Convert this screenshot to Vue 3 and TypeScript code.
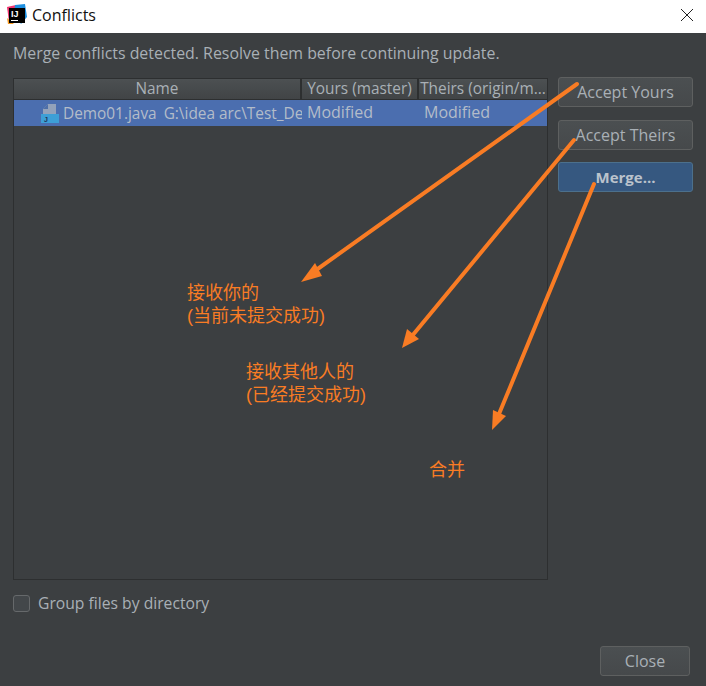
<script setup lang="ts">
interface Arrow { points: string; head: string }
const arrows: Arrow[] = [
  { points: '577,84 312,273', head: '301,282 315,263 322,276' },
  { points: '574,140 412,336', head: '402,348 407,329 419,339' },
  { points: '594,184 499,414', head: '492,430 493,410 506,416' }
]
</script>

<template>
  <div class="window">
    <header class="titlebar">
      <svg class="logo" width="21" height="21" viewBox="0 0 21 21">
        <path d="M1 3 L10 1 L10 12 L3 18 Z" fill="#f0356f" />
        <path d="M9 1 L19 0 L21 13 L15 20 L8 9 Z" fill="#1c8fe0" />
        <path d="M1 14 L8 20 L2 20 Z" fill="#f59a23" />
        <rect x="3" y="4" width="16" height="15" fill="#000" />
        <rect x="5" y="16" width="7" height="1" fill="#fff" />
        <text x="5" y="13" class="logo-text">IJ</text>
      </svg>
      <span class="title">Conflicts</span>
      <svg class="close-x" width="14" height="14" viewBox="0 0 14 14">
        <path d="M1 1 L13 13 M13 1 L1 13" stroke="#222" stroke-width="1" fill="none" />
      </svg>
    </header>

    <main class="dialog">
      <p class="message">Merge conflicts detected. Resolve them before continuing update.</p>

      <div class="content">
        <div class="table">
          <div class="thead">
            <div class="th name">Name</div>
            <div class="th yours">Yours (master)</div>
            <div class="th theirs">Theirs (origin/m...</div>
          </div>
          <div class="row">
            <div class="td name">
              <svg class="file-icon" width="20" height="20" viewBox="0 0 20 20">
                <path d="M8 1 H16 V11 H3 V6 Z" fill="#93a2ba" />
                <path d="M8 1 V6 H3 Z" fill="#4e6fa8" />
                <rect x="1" y="11" width="18" height="9" fill="#3d9fd6" />
                <text x="4" y="19" class="file-j">J</text>
              </svg>
              <span class="filename">Demo01.java</span>
              <span class="path">G:\idea arc\Test_De</span>
            </div>
            <div class="td yours">Modified</div>
            <div class="td theirs">Modified</div>
          </div>
        </div>

        <div class="actions">
          <button class="btn action">Accept Yours</button>
          <button class="btn action">Accept Theirs</button>
          <button class="btn action primary">Merge...</button>
        </div>
      </div>

      <label class="group">
        <span class="checkbox"></span>
        <span>Group files by directory</span>
      </label>

      <div class="footer">
        <button class="btn close">Close</button>
      </div>
    </main>

    <svg class="arrows" width="706" height="686" viewBox="0 0 706 686">
      <g v-for="(a, i) in arrows" :key="i">
        <polyline :points="a.points" stroke="#f97c24" stroke-width="4" stroke-linecap="round" fill="none" />
        <polygon :points="a.head" fill="#f97c24" />
      </g>
    </svg>

    <div class="note note-a">接收你的<br />(当前未提交成功)</div>
    <div class="note note-b">接收其他人的<br />(已经提交成功)</div>
    <div class="note note-c">合并</div>
  </div>
</template>

<style>
html, body { margin: 0; background: #3c3f41; }
</style>

<style scoped>
.window {
  position: relative;
  width: 706px;
  height: 686px;
  overflow: hidden;
  display: flex;
  flex-direction: column;
  font-family: "Open Sans", "Noto Sans", sans-serif;
  color: #a9b0b6;
  background: #3c3f41;
}
.titlebar {
  height: 33px;
  box-sizing: border-box;
  flex: none;
  background: #fff;
  display: flex;
  align-items: center;
  padding: 0 12px 4px 6px;
}
.logo { flex: none; margin-right: 5px; }
.logo-text { font: 700 9px "Liberation Sans", sans-serif; fill: #fff; }
.title { font-size: 16px; color: #111; flex: 1; }
.dialog {
  flex: 1;
  display: flex;
  flex-direction: column;
  padding: 0 13px 10px 13px;
  min-height: 0;
}
.message {
  margin: 9px 0 0;
  height: 36px;
  font-size: 15.9px;
  line-height: 22px;
}
.content { display: flex; align-items: flex-start; }
.table {
  width: 535px;
  height: 502px;
  box-sizing: border-box;
  border: 1px solid #2d2f30;
  flex: none;
}
.thead {
  display: flex;
  height: 20px;
  background: linear-gradient(#4c5052, #414446);
  border-bottom: 1px solid #2d2f30;
  font-size: 15.4px;
  line-height: 19px;
}
.th {
  box-sizing: border-box;
  text-align: center;
  white-space: nowrap;
  overflow: hidden;
}
.name { width: 288px; flex: none; }
.yours { width: 117px; flex: none; }
.theirs { flex: 1; min-width: 0; }
.th.name, .th.yours { border-right: 2px solid #2d2f30; }
.row {
  display: flex;
  height: 26px;
  background: #4b6eaf;
  font-size: 16px;
  line-height: 25px;
  color: #b3bcc9;
}
.td { white-space: nowrap; overflow: hidden; box-sizing: border-box; }
.td.name { display: flex; align-items: center; padding-left: 26px; font-size: 15.4px; }
.td.yours { padding-left: 5px; }
.td.theirs { padding-left: 5px; }
.file-icon { flex: none; margin-right: 3px; }
.file-j { font: 700 7px "Liberation Sans", sans-serif; fill: #1d3557; }
.filename { margin-right: 7px; flex: none; }
.path { flex: none; }
.actions {
  display: flex;
  flex-direction: column;
  margin-left: 10px;
  gap: 13px;
  margin-top: -1px;
}
.btn {
  font-family: inherit;
  font-size: 16px;
  color: #a9b0b6;
  box-sizing: border-box;
  border: 1px solid #5e6060;
  border-radius: 3px;
  background: linear-gradient(#4b4f51, #46494b);
  padding: 0;
}
.action { width: 135px; height: 30px; }
.primary {
  margin-top: -1px;
  background: #365880;
  border-color: #4c708c;
  font-weight: 700;
  font-size: 15px;
  color: #bbc3cc;
}
.group {
  display: flex;
  align-items: center;
  gap: 8px;
  margin-top: 13px;
  height: 20px;
  font-size: 15.7px;
}
.checkbox {
  width: 17px;
  height: 17px;
  box-sizing: border-box;
  border: 1px solid #66696b;
  border-radius: 3px;
  background: #43474a;
}
.footer { margin-top: auto; display: flex; justify-content: flex-end; padding-right: 3px; }
.close { width: 90px; height: 30px; }
.arrows { position: absolute; left: 0; top: 0; pointer-events: none; }
.note {
  position: absolute;
  font-family: "Liberation Sans", "Noto Sans CJK SC", sans-serif;
  font-size: 18px;
  line-height: 23px;
  color: #f97c24;
  white-space: nowrap;
}
.note-a { left: 187px; top: 282px; }
.note-b { left: 246px; top: 361px; }
.note-c { left: 429px; top: 459px; }
</style>
